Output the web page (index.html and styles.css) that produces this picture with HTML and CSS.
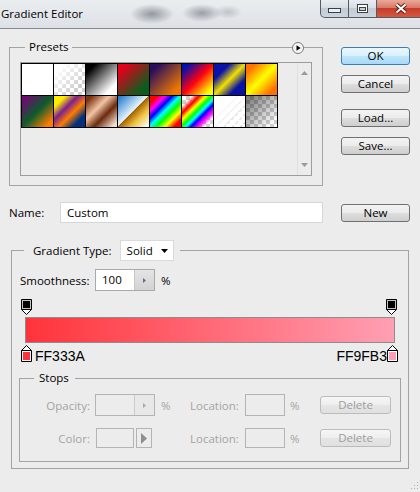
FILE: index.html
```html
<!DOCTYPE html>
<html>
  <head>
    <title>Gradient Editor</title>
    <link rel="stylesheet" href="styles.css">
  </head>
  <body>
    <div class="window">
      <!-- title bar -->
      <div class="titlebar">
        <span class="title">Gradient Editor</span>
        <div class="caption">
          <span class="cap cap-min">
            <svg width="13" height="5" viewBox="0 0 13 5"><rect x="0.5" y="0.5" width="12" height="4" fill="#eef1f4" stroke="#3b4047"/></svg>
          </span>
          <span class="cap cap-max">
            <svg width="11" height="9" viewBox="0 0 11 9"><rect x="0.5" y="0.5" width="10" height="8" fill="#fff" stroke="#3b4047"/><rect x="2.5" y="3.5" width="6" height="3" fill="#c9d0d8" stroke="#3b4047"/></svg>
          </span>
          <span class="cap cap-close">
            <svg width="14" height="11" viewBox="0 0 14 11"><path d="M2.5 1.5L11.5 9.5M11.5 1.5L2.5 9.5" stroke="#5b1c12" stroke-width="4"/><path d="M2.5 1.5L11.5 9.5M11.5 1.5L2.5 9.5" stroke="#fff" stroke-width="2"/></svg>
          </span>
        </div>
      </div>

      <div class="content">
        <div class="top">
          <fieldset class="group presets">
            <legend>Presets</legend>
            <span class="menu-btn">
              <svg width="12" height="12" viewBox="0 0 12 12"><circle cx="6" cy="6" r="5.5" fill="#f6f6f6" stroke="#7a7a7a"/><path d="M4.5 3.2L8.6 6L4.5 8.8z" fill="#000"/></svg>
            </span>
            <div class="preset-list">
              <div class="swatches">
                <span class="sw p1"></span>
                <span class="sw p2"></span>
                <span class="sw p3"></span>
                <span class="sw p4"></span>
                <span class="sw p5"></span>
                <span class="sw p6"></span>
                <span class="sw p7"></span>
                <span class="sw p8"></span>
                <span class="sw p9"></span>
                <span class="sw p10"></span>
                <span class="sw p11"></span>
                <span class="sw p12"></span>
                <span class="sw p13"></span>
                <span class="sw p14"></span>
                <span class="sw p15"></span>
                <span class="sw p16"></span>
              </div>
              <div class="scroll">
                <svg width="7" height="4" viewBox="0 0 7 4"><path d="M3.5 0L7 4H0z" fill="#9a9a9a"/></svg>
                <svg width="7" height="4" viewBox="0 0 7 4"><path d="M0 0h7L3.5 4z" fill="#9a9a9a"/></svg>
              </div>
            </div>
          </fieldset>

          <div class="side">
            <div class="btn btn-default">OK</div>
            <div class="btn btn-cancel">Cancel</div>
            <div class="btn btn-load">Load...</div>
            <div class="btn btn-save">Save...</div>
          </div>
        </div>

        <div class="name-row">
          <span class="name-label">Name:</span>
          <span class="name-input">Custom</span>
          <div class="btn btn-new">New</div>
        </div>

        <fieldset class="group gradient">
          <legend>
            <span>Gradient Type:</span>
            <span class="select">Solid <svg width="7" height="4" viewBox="0 0 7 4"><path d="M0 0h7L3.5 4z" fill="#000"/></svg></span>
          </legend>

          <div class="smooth-row">
            <span class="smooth-label">Smoothness:</span>
            <span class="spin">
              <span class="spin-val">100</span>
              <span class="spin-btn"><svg width="3" height="5" viewBox="0 0 3 5"><path d="M0 0L3 2.5L0 5z" fill="#5e6f93"/></svg></span>
            </span>
            <span class="pct">%</span>
          </div>

          <div class="stops-top">
            <svg width="11" height="16" viewBox="0 0 11 16"><path d="M0.5 0.5h10v10l-5 5l-5-5z" fill="#fff" stroke="#000"/><path d="M0.5 10.5h10" stroke="#000"/><rect x="1" y="1" width="9" height="9" fill="#c4c4c4"/><rect x="2" y="2" width="7" height="7" fill="#000"/></svg>
            <svg width="11" height="16" viewBox="0 0 11 16"><path d="M0.5 0.5h10v10l-5 5l-5-5z" fill="#fff" stroke="#000"/><path d="M0.5 10.5h10" stroke="#000"/><rect x="1" y="1" width="9" height="9" fill="#c4c4c4"/><rect x="2" y="2" width="7" height="7" fill="#000"/></svg>
          </div>

          <div class="bar"></div>

          <div class="stops-bottom">
            <svg width="11" height="17" viewBox="0 0 11 17"><path d="M5.5 0.5l5 5v11h-10v-11z" fill="#fff" stroke="#000"/><path d="M0.5 5.5h10" stroke="#000"/><rect x="2" y="7" width="7" height="8" fill="#ff333a"/></svg>
            <span class="hex hex-left">FF333A</span>
            <span class="hex hex-right">FF9FB3</span>
            <svg width="11" height="17" viewBox="0 0 11 17"><path d="M5.5 0.5l5 5v11h-10v-11z" fill="#fff" stroke="#000"/><path d="M0.5 5.5h10" stroke="#000"/><rect x="2" y="7" width="7" height="8" fill="#ff9fb3"/></svg>
          </div>

          <fieldset class="group stops">
            <legend>Stops</legend>
            <div class="srow">
              <span class="s-lbl">Opacity:</span>
              <span class="s-slot">
                <span class="spin off">
                  <span class="spin-val"></span>
                  <span class="spin-btn"><svg width="3" height="5" viewBox="0 0 3 5"><path d="M0 0L3 2.5L0 5z" fill="#a8a8a8"/></svg></span>
                </span>
                <span class="pct">%</span>
              </span>
              <span class="s-lbl2">Location:</span>
              <span class="s-slot2">
                <span class="fld"></span>
                <span class="pct2">%</span>
              </span>
              <span class="s-del">Delete</span>
            </div>
            <div class="srow">
              <span class="s-lbl">Color:</span>
              <span class="s-slot">
                <span class="color-box"></span>
                <span class="color-arrow"><svg width="6" height="11" viewBox="0 0 6 11"><path d="M0 0L6 5.5L0 11z" fill="#8e8e8e"/></svg></span>
              </span>
              <span class="s-lbl2">Location:</span>
              <span class="s-slot2">
                <span class="fld"></span>
                <span class="pct2">%</span>
              </span>
              <span class="s-del">Delete</span>
            </div>
          </fieldset>
        </fieldset>

        <div class="grip-row">
          <svg width="8" height="8" viewBox="0 0 8 8"><rect x="6" y="0" width="1" height="1" fill="#b0b0b0"/><rect x="3" y="3" width="1" height="1" fill="#b0b0b0"/><rect x="6" y="3" width="1" height="1" fill="#b0b0b0"/><rect x="0" y="6" width="1" height="1" fill="#b0b0b0"/><rect x="3" y="6" width="1" height="1" fill="#b0b0b0"/><rect x="6" y="6" width="1" height="1" fill="#b0b0b0"/></svg>
        </div>
      </div>
    </div>
  </body>
</html>
```

FILE: styles.css
```css
/* dialog window */
body {
  margin: 0;
}
.window {
  width: 420px;
  height: 492px;
  background-color: #ececec;
  font-family: "Open Sans", "Liberation Sans", sans-serif;
  font-size: 11.5px;
  color: #000;
  overflow: hidden;
}

/* title bar with glass look */
.titlebar {
  height: 28px;
  border-bottom: 1px solid #868c93;
  display: flex;
  align-items: flex-start;
  background:
    radial-gradient(ellipse 22px 10px at 152px 14px, rgba(80, 86, 96, 0.55), rgba(80, 86, 96, 0)),
    radial-gradient(ellipse 20px 9px at 202px 13px, rgba(80, 86, 96, 0.5), rgba(80, 86, 96, 0)),
    radial-gradient(ellipse 14px 7px at 228px 12px, rgba(80, 86, 96, 0.25), rgba(80, 86, 96, 0)),
    linear-gradient(#eaedf0, #dde1e6);
}
.title {
  line-height: 28px;
  padding-left: 1px;
}
.caption {
  margin-left: auto;
  display: flex;
}
.cap {
  height: 18px;
  box-sizing: border-box;
  border: 1px solid #555b63;
  border-top: none;
  display: flex;
  align-items: center;
  justify-content: center;
  background: linear-gradient(#e9edf2, #d8dee6 45%, #c3cbd5 50%, #ccd4dd);
}
.cap-min {
  width: 29px;
  border-radius: 0 0 0 5px;
  padding-top: 4px;
}
.cap-max {
  width: 28px;
  border-left: none;
}
.cap-close {
  width: 43px;
  border-left: none;
  border-right: none;
  padding-left: 4px;
  background: linear-gradient(#eaa898, #d9796a 45%, #c63d28 50%, #d65740);
}

/* main area */
.content {
  padding: 0 10px 0 9px;
}
.top {
  display: flex;
  align-items: flex-start;
  margin-top: 10px;
}

/* group boxes */
.group {
  margin: 0;
  border: 1px solid #a3a3a3;
  position: relative;
  min-width: 0;
}
.group legend {
  line-height: 16px;
}
.presets {
  width: 314px;
  box-sizing: border-box;
  padding: 7px 10px 9px;
}
.presets legend {
  margin-left: 5px;
  padding: 0 3px 0 4px;
}
.menu-btn {
  position: absolute;
  top: -13px;
  right: 18px;
  width: 12px;
  height: 12px;
  background-color: #ececec;
  display: flex;
}
.preset-list {
  height: 114px;
  box-sizing: border-box;
  border: 1px solid #9d9d9d;
  display: flex;
}
.swatches {
  display: grid;
  grid-template-columns: repeat(8, 31px);
  grid-auto-rows: 31px;
  gap: 1px;
  padding: 1px;
  background-color: #000;
  align-self: flex-start;
}
.scroll {
  margin-left: auto;
  width: 13px;
  border-left: 1px solid #e0e0e0;
  display: flex;
  flex-direction: column;
  justify-content: space-between;
  align-items: center;
  padding: 8px 0;
}

/* preset swatches */
.sw {
  display: block;
}
.p1 { background: #fff; }
.p2 {
  background:
    linear-gradient(135deg, #fff 15%, rgba(255, 255, 255, 0) 75%),
    repeating-conic-gradient(#cfcfcf 0 25%, #fff 0 50%) 0 0 / 8px 8px;
}
.p3 { background: linear-gradient(135deg, #000 15%, #fff 80%); }
.p4 { background: linear-gradient(135deg, #e3001b 15%, #0b5d1e 80%); }
.p5 { background: linear-gradient(135deg, #2b0f5c 15%, #f07800 85%); }
.p6 { background: linear-gradient(135deg, #0010b0 10%, #ff0010 50%, #ffff00 88%); }
.p7 { background: linear-gradient(135deg, #0a12a8 25%, #f2e000 50%, #0a12a0 75%); }
.p8 { background: linear-gradient(135deg, #ff7400 15%, #ffff00 50%, #ff7000 85%); }
.p9 { background: linear-gradient(135deg, #6a0d6e 10%, #0d5c2c 50%, #ff7c00 88%); }
.p10 { background: linear-gradient(135deg, #ffec00 18%, #7c2090 38%, #ff7c00 58%, #00307e 80%); }
.p11 { background: linear-gradient(135deg, #7c3510 10%, #f2c4a6 38%, #6b2a0e 62%, #f4dccb 92%); }
.p12 { background: linear-gradient(135deg, #2a80d0 5%, #e8f4ff 48%, #a46300 50%, #f0c040 70%, #fffbe8 95%); }
.p13 { background: linear-gradient(135deg, #ff0000 12%, #ff00ff 24%, #0000ff 36%, #00ffff 48%, #00ff00 60%, #ffff00 74%, #ff0000 88%); }
.p14 {
  background:
    linear-gradient(135deg, rgba(255, 0, 0, 0) 15%, #ff0000 28%, #ffff00 38%, #00ff00 48%, #00ffff 56%, #0000ff 64%, #ff00ff 74%, rgba(255, 0, 255, 0) 86%),
    repeating-conic-gradient(#cfcfcf 0 25%, #fff 0 50%) 0 0 / 8px 8px;
}
.p15 {
  background:
    repeating-linear-gradient(135deg, rgba(255, 255, 255, 0.95) 0 4px, rgba(255, 255, 255, 0.3) 4px 6px),
    linear-gradient(135deg, #fff 25%, rgba(255, 255, 255, 0) 90%),
    repeating-conic-gradient(#cfcfcf 0 25%, #fff 0 50%) 0 0 / 8px 8px;
}
.p16 {
  background:
    linear-gradient(135deg, rgba(0, 0, 0, 0.55) 0%, rgba(0, 0, 0, 0) 90%),
    repeating-conic-gradient(#cfcfcf 0 25%, #fff 0 50%) 0 0 / 8px 8px;
}

/* buttons */
.side {
  margin-left: 18px;
  width: 69px;
  display: flex;
  flex-direction: column;
  padding-top: 8px;
}
.btn {
  height: 18px;
  box-sizing: border-box;
  border: 1px solid #707070;
  border-radius: 3px;
  background: linear-gradient(#f3f3f3, #ebebeb 50%, #dddddd 51%, #cfcfcf);
  line-height: 16px;
  text-align: center;
}
.btn-default {
  border-color: #3c7fb1;
  background: linear-gradient(#eaf6fd, #d9f0fc 50%, #bee6fd 51%, #a7d9f5);
}
.btn-cancel {
  margin-top: 10px;
}
.btn-load {
  margin-top: 16px;
}
.btn-save {
  margin-top: 10px;
}

/* name row */
.name-row {
  display: flex;
  align-items: center;
  margin-top: 16px;
  height: 21px;
}
.name-label {
  width: 51px;
}
.name-input {
  width: 263px;
  height: 21px;
  box-sizing: border-box;
  border: 1px solid #d6d6d6;
  background-color: #fff;
  padding-left: 6px;
  line-height: 19px;
}
.btn-new {
  margin-left: 18px;
  width: 69px;
}

/* gradient group */
.gradient {
  margin: 17px 1px 0 2px;
  padding: 8px 7px 6px;
}
.gradient > legend {
  margin-left: 5px;
  padding: 0 6px 0 9px;
  display: flex;
  align-items: center;
}
.select {
  margin-left: 8px;
  width: 54px;
  height: 21px;
  box-sizing: border-box;
  border: 1px solid #dadada;
  background-color: #fff;
  display: flex;
  align-items: center;
  justify-content: space-between;
  padding: 0 5px 0 6px;
}
.smooth-row {
  display: flex;
  align-items: center;
  height: 22px;
  margin-left: 1px;
}
.smooth-label {
  width: 75px;
}
.spin {
  width: 60px;
  height: 100%;
  box-sizing: border-box;
  border: 1px solid #a9a9a9;
  background-color: #fff;
  display: flex;
}
.spin-val {
  flex: 1;
  padding-left: 6px;
  line-height: 20px;
}
.spin-btn {
  width: 19px;
  border-left: 1px solid #c9c9c9;
  background: linear-gradient(#e4e4e4, #d2d2d2);
  display: flex;
  align-items: center;
  justify-content: center;
}
.pct {
  margin-left: 6px;
}

/* gradient bar and stops */
.stops-top {
  display: flex;
  justify-content: space-between;
  margin-top: 8px;
  padding: 0 4px 0 2px;
  height: 16px;
}
.bar {
  height: 26px;
  box-sizing: border-box;
  margin: 2px 6px 0;
  border: 1px solid #8d8d8d;
  background: linear-gradient(to right, #ff333a, #ff9fb3);
}
.stops-bottom {
  display: flex;
  align-items: flex-start;
  margin-top: 2px;
  padding: 0 3px 0 2px;
  height: 20px;
}
.hex {
  font-family: "Liberation Sans", Arial, sans-serif;
  font-size: 14px;
  line-height: 17px;
  margin-top: 3px;
}
.hex-left {
  margin-left: 3px;
}
.hex-right {
  margin-left: auto;
}

/* stops group */
.stops {
  margin-top: 5px;
  padding: 8px 0 13px;
}
.stops legend {
  margin-left: 14px;
  padding: 0 6px 0 5px;
}
.srow {
  display: flex;
  align-items: center;
  height: 22px;
  color: #a4a4a4;
}
.srow + .srow {
  margin-top: 12px;
  height: 20px;
}
.s-lbl {
  width: 70px;
  text-align: right;
}
.s-slot {
  margin-left: 5px;
  width: 95px;
  height: 100%;
  display: flex;
  align-items: center;
}
.s-lbl2 {
  width: 50px;
}
.s-slot2 {
  margin-left: 5px;
  width: 75px;
  height: 100%;
  display: flex;
  align-items: center;
}
.spin.off {
  border-color: #b4b4b4;
  background-color: #ececec;
}
.spin.off .spin-btn {
  background: #e8e8e8;
  border-left-color: #cacaca;
}
.fld {
  width: 40px;
  height: 100%;
  box-sizing: border-box;
  border: 1px solid #b4b4b4;
}
.pct2 {
  margin-left: 5px;
}
.color-box {
  margin-left: 1px;
  width: 38px;
  height: 100%;
  box-sizing: border-box;
  border: 1px solid #b4b4b4;
}
.color-arrow {
  margin-left: 2px;
  width: 16px;
  height: 100%;
  box-sizing: border-box;
  border: 1px solid #b4b4b4;
  display: flex;
  align-items: center;
  justify-content: center;
}
.s-del {
  width: 71px;
  height: 18px;
  box-sizing: border-box;
  border: 1px solid #bcbcbc;
  border-radius: 3px;
  background: linear-gradient(#f6f6f6, #eeeeee 50%, #e5e5e5 51%, #e0e0e0);
  text-align: center;
  line-height: 16px;
  color: #9c9c9c;
}

.grip-row {
  display: flex;
  justify-content: flex-end;
  margin: 13px -9px 0 0;
}
```
